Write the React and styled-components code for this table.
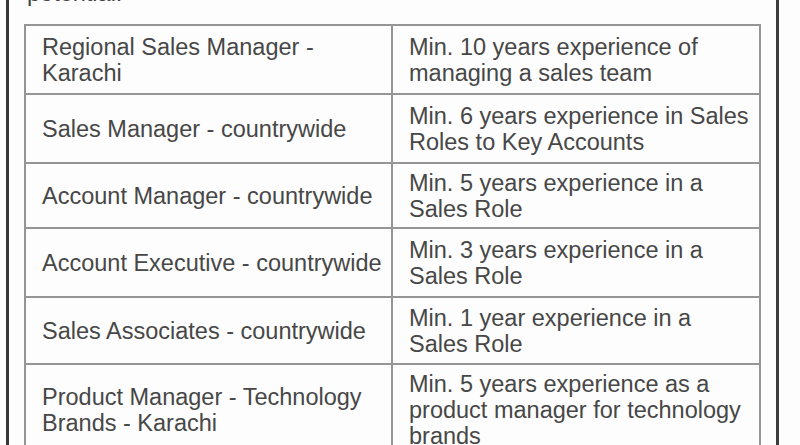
import React from "react";
import styled, { createGlobalStyle } from "styled-components";

const GlobalStyle = createGlobalStyle`
  html, body {
    margin: 0;
    padding: 0;
    background: #fdfdfd;
    overflow: hidden;
  }
  body {
    font-family: "Liberation Sans", Arial, sans-serif;
  }
`;

const Frame = styled.div`
  box-sizing: border-box;
  margin-left: 6px;
  width: 773px;
  height: 445px;
  border-left: 3px solid #383838;
  border-right: 3px solid #3c3c3c;
  padding-left: 15px;
  overflow: hidden;
`;

const Intro = styled.p`
  margin: -20px 0 0 3px;
  font-size: 23.5px;
  line-height: 26px;
  color: #444;
`;

const Table = styled.div`
  box-sizing: border-box;
  width: 737px;
  margin-top: 18px;
  border: 2px solid #959595;
  border-bottom: none;
`;

const Row = styled.div`
  box-sizing: border-box;
  display: grid;
  grid-template-columns: 365px 1fr;
  height: ${(p) => (p.$h ? `${p.$h}px` : "auto")};
  border-bottom: 2px solid #959595;
`;

const Cell = styled.div`
  display: flex;
  align-items: center;
  padding: 6px 6px 6px 16px;
  font-size: 23.5px;
  line-height: 26px;
  color: #474747;
  border-left: ${(p) => (p.$right ? "2px solid #959595" : "none")};
`;

const rows = [
  ["Regional Sales Manager - Karachi", "Min. 10 years experience of managing a sales team", 69],
  ["Sales Manager - countrywide", "Min. 6 years experience in Sales Roles to Key Accounts", 69],
  ["Account Manager - countrywide", "Min. 5 years experience in a Sales Role", 65],
  ["Account Executive - countrywide", "Min. 3 years experience in a Sales Role", 69],
  ["Sales Associates - countrywide", "Min. 1 year experience in a Sales Role", 67],
  ["Product Manager - Technology Brands - Karachi", "Min. 5 years experience as a product manager for technology brands", null],
];

export default function App() {
  return (
    <>
      <GlobalStyle />
      <Frame>
        <Intro>potential.</Intro>
        <Table>
          {rows.map(([role, req, h]) => (
            <Row key={role} $h={h}>
              <Cell>{role}</Cell>
              <Cell $right>{req}</Cell>
            </Row>
          ))}
        </Table>
      </Frame>
    </>
  );
}
